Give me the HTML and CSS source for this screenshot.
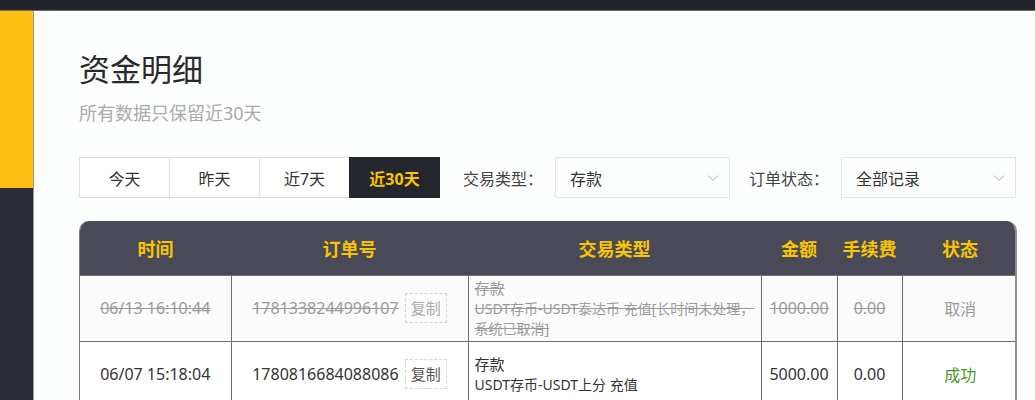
FILE: index.html
```html
<!DOCTYPE html>
<html lang="zh-CN">
<head>
  <meta charset="UTF-8" />
  <meta name="viewport" content="width=device-width, initial-scale=1.0" />
  <title>资金明细</title>
  <link rel="stylesheet" href="styles.css">
</head>
<body>
  <div class="topbar"></div>
  <div class="layout">
    <aside class="sidebar">
      <div class="sidebar-active"></div>
    </aside>
    <main class="main">
      <h1>资金明细</h1>
      <p class="subtitle">所有数据只保留近30天</p>

      <div class="filters">
        <div class="tabs">
          <button class="tab">今天</button>
          <button class="tab">昨天</button>
          <button class="tab">近7天</button>
          <button class="tab active">近30天</button>
        </div>
        <span class="filter-label type-label">交易类型：</span>
        <div class="select">
          <span>存款</span>
          <svg width="12" height="8" viewBox="0 0 12 8"><path d="M1 1.5 L6 6.5 L11 1.5" fill="none" stroke="#c9c9c9" stroke-width="1.2"/></svg>
        </div>
        <span class="filter-label status-label">订单状态：</span>
        <div class="select">
          <span>全部记录</span>
          <svg width="12" height="8" viewBox="0 0 12 8"><path d="M1 1.5 L6 6.5 L11 1.5" fill="none" stroke="#c9c9c9" stroke-width="1.2"/></svg>
        </div>
      </div>

      <div class="table-wrap">
        <table class="records">
          <colgroup>
            <col style="width:151px">
            <col style="width:237px">
            <col style="width:293px">
            <col style="width:76px">
            <col style="width:65px">
            <col style="width:116px">
          </colgroup>
          <thead>
            <tr>
              <th>时间</th>
              <th>订单号</th>
              <th>交易类型</th>
              <th>金额</th>
              <th>手续费</th>
              <th>状态</th>
            </tr>
          </thead>
          <tbody>
            <tr class="cancelled">
              <td class="del">06/13 16:10:44</td>
              <td><span class="del">1781338244996107</span> <span class="copy">复制</span></td>
              <td class="type del">
                <div class="type-name">存款</div>
                <div class="type-desc">USDT存币-USDT泰达币 充值[长时间未处理，系统已取消]</div>
              </td>
              <td class="del">1000.00</td>
              <td class="del">0.00</td>
              <td class="status">取消</td>
            </tr>
            <tr>
              <td>06/07 15:18:04</td>
              <td>1780816684088086 <span class="copy">复制</span></td>
              <td class="type">
                <div class="type-name">存款</div>
                <div class="type-desc">USDT存币-USDT上分 充值</div>
              </td>
              <td>5000.00</td>
              <td>0.00</td>
              <td class="status ok">成功</td>
            </tr>
          </tbody>
        </table>
      </div>
    </main>
  </div>
</body>
</html>
```

FILE: styles.css
```css
* { box-sizing: border-box; }
body {
  margin: 0;
  height: 400px;
  overflow: hidden;
  font-family: "Noto Sans", "Noto Sans CJK SC", sans-serif;
  background: #fdfefe;
  color: #333;
}
.topbar {
  height: 11px;
  background: #22242c;
  border-bottom: 1px solid #6b6b6b;
}
.layout {
  display: flex;
  height: 389px;
}
.sidebar {
  width: 34px;
  flex-shrink: 0;
  background: #2b2c36;
  border-right: 1px solid #9a9ba2;
}
.sidebar-active {
  height: 177px;
  background: #fdbf12;
}
.main {
  flex: 1;
  min-width: 0;
  padding: 38px 18px 0 45px;
}
h1 {
  margin: 0;
  font-size: 31px;
  line-height: 40px;
  font-weight: 400;
  color: #2a2a2a;
}
.subtitle {
  margin: 12px 0 0;
  font-size: 18px;
  line-height: 24px;
  color: #aaa;
}
.filters {
  display: flex;
  align-items: center;
  margin-top: 32px;
  height: 41px;
}
.tabs {
  display: flex;
  flex-shrink: 0;
}
.tab {
  width: 91px;
  height: 41px;
  margin-left: -1px;
  border: 1px solid #e0e0e0;
  background: #fff;
  font-family: inherit;
  font-size: 16px;
  color: #333;
  cursor: pointer;
}
.tab:first-child { margin-left: 0; }
.tab.active {
  background: #25262e;
  border-color: #25262e;
  color: #f7c600;
  font-weight: 700;
}
.filter-label {
  flex-shrink: 0;
  white-space: nowrap;
  font-size: 16px;
  color: #444;
}
.type-label { margin: 0 12px 0 23px; }
.status-label { margin: 0 12px 0 19px; }
.select {
  flex-shrink: 0;
  width: 175px;
  height: 41px;
  border: 1px solid #e4e4e4;
  padding: 0 10px 0 14px;
  display: flex;
  align-items: center;
  justify-content: space-between;
  font-size: 16px;
  color: #333;
}
.table-wrap {
  margin-top: 23px;
  border-radius: 10px 10px 0 0;
  overflow: hidden;
  border-right: 2px solid #8e8e8e;
  border-left: 1px solid #7a7a7a;
}
.records {
  width: 100%;
  border-collapse: collapse;
  table-layout: fixed;
}
.records th {
  height: 54px;
  background: #4a4957;
  color: #f7c600;
  font-size: 18px;
  font-weight: 700;
}
.records td {
  height: 66px;
  border: 1px solid #6e6e6e;
  text-align: center;
  font-size: 16px;
  color: #333;
  background: #fff;
}
.records td:first-child { border-left: none; }
.records td:last-child { border-right: none; }
.records tr.cancelled td { background: #fbfbfb; }
.records .del {
  color: #9a9a9a;
  text-decoration: line-through;
}
.copy {
  display: inline-block;
  margin-left: 2px;
  padding: 4px 5px;
  border: 1px dashed #d4d4d4;
  font-size: 15px;
  line-height: 20px;
  color: #555;
}
.cancelled .copy { color: #aaa; }
.records td.type {
  text-align: left;
  padding: 0 6px;
}
.type-name {
  font-size: 15px;
  line-height: 21px;
}
.type-desc {
  font-size: 14px;
  line-height: 20px;
}
.records .status { color: #999; }
.records .status.ok { color: #3f9a22; }
```
